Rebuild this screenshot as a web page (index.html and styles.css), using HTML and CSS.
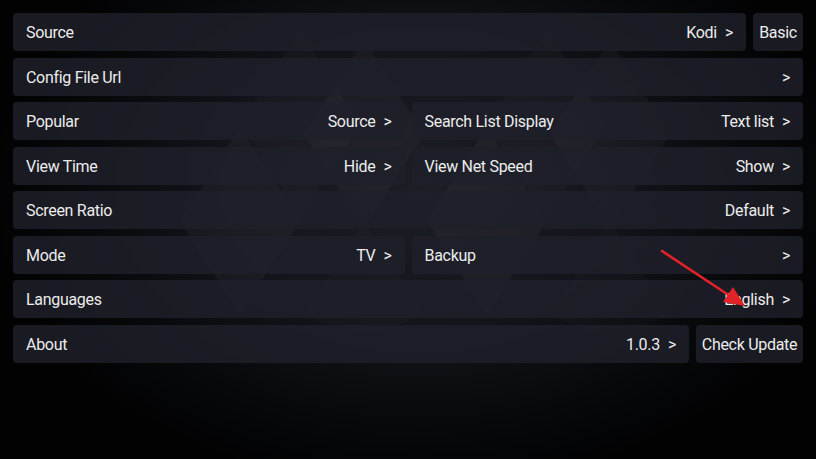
FILE: index.html
```html
<!DOCTYPE html>
<html>
<head>
<meta charset="utf-8">
<link rel="stylesheet" href="styles.css">
</head>
<body>
<div class="screen">
  <svg class="pattern" width="816" height="459" viewBox="0 0 816 459">
    <g fill="#ffffff">
      <polygon points="240,127 300,221 240,315 180,221" opacity="0.035"/>
      <polygon points="364,40 424,134 364,228 304,134" opacity="0.03"/>
      <polygon points="487,127 547,221 487,315 427,221" opacity="0.035"/>
      <polygon points="610,40 670,134 610,228 550,134" opacity="0.03"/>
      <polygon points="300,30 360,124 300,218 240,124" opacity="0.025"/>
      <polygon points="547,30 607,124 547,218 487,124" opacity="0.025"/>
      <polygon points="364,221 424,315 364,340 304,315" opacity="0.015"/>
      <polygon points="610,221 670,315 610,340 550,315" opacity="0.015"/>
    </g>
  </svg>
  <div class="list">
    <div class="row">
      <div class="item grow"><span>Source</span><span class="val">Kodi<span class="chev">&gt;</span></span></div>
      <div class="item btn basic">Basic</div>
    </div>
    <div class="row">
      <div class="item grow"><span>Config File Url</span><span class="val"><span class="chev">&gt;</span></span></div>
    </div>
    <div class="row half">
      <div class="item"><span>Popular</span><span class="val">Source<span class="chev">&gt;</span></span></div>
      <div class="item"><span>Search List Display</span><span class="val">Text list<span class="chev">&gt;</span></span></div>
    </div>
    <div class="row half">
      <div class="item"><span>View Time</span><span class="val">Hide<span class="chev">&gt;</span></span></div>
      <div class="item"><span>View Net Speed</span><span class="val">Show<span class="chev">&gt;</span></span></div>
    </div>
    <div class="row">
      <div class="item grow"><span>Screen Ratio</span><span class="val">Default<span class="chev">&gt;</span></span></div>
    </div>
    <div class="row half">
      <div class="item"><span>Mode</span><span class="val">TV<span class="chev">&gt;</span></span></div>
      <div class="item"><span>Backup</span><span class="val"><span class="chev">&gt;</span></span></div>
    </div>
    <div class="row">
      <div class="item grow"><span>Languages</span><span class="val">English<span class="chev">&gt;</span></span></div>
    </div>
    <div class="row">
      <div class="item grow"><span>About</span><span class="val">1.0.3<span class="chev">&gt;</span></span></div>
      <div class="item btn update">Check Update</div>
    </div>
  </div>
  <svg class="arrow" width="816" height="459" viewBox="0 0 816 459">
    <line x1="662" y1="251" x2="730" y2="296" stroke="#e32228" stroke-width="2.6" stroke-linecap="round"/>
    <polygon points="745,306 733,287 723,302" fill="#e32228"/>
  </svg>
</div>
</body>
</html>
```
FILE: styles.css
```css
* { box-sizing: border-box; }
html, body {
  margin: 0;
  padding: 0;
  background: #020203;
}
.screen {
  position: relative;
  width: 816px;
  height: 459px;
  overflow: hidden;
  font-family: Roboto, "Liberation Sans", sans-serif;
  background:
    radial-gradient(ellipse 430px 300px at 420px 190px, #1c1e26 0%, #14151b 45%, #07080a 80%, #020203 100%);
}
.pattern {
  position: absolute;
  left: 0;
  top: 0;
}
.arrow {
  position: absolute;
  left: 0;
  top: 0;
  pointer-events: none;
}
.list {
  position: relative;
  padding: 13px 13px 0 13px;
  display: flex;
  flex-direction: column;
  gap: 6.5px;
}
.row {
  display: flex;
  gap: 7px;
  height: 38px;
}
.row.half > .item {
  flex: 1 1 0;
}
.item {
  display: flex;
  align-items: center;
  justify-content: space-between;
  padding: 1px 13px 0 13px;
  background: rgba(30, 32, 42, 0.82);
  border-radius: 4px;
  color: #ececec;
  font-size: 16px;
  letter-spacing: -0.3px;
  white-space: nowrap;
}
.chev {
  margin-left: 8px;
}
.item.grow {
  flex: 1 1 auto;
}
.item.btn {
  justify-content: center;
  padding: 1px 4px 0 4px;
  flex: 0 0 auto;
}
.basic { width: 50px; }
.update { width: 107px; }
```
